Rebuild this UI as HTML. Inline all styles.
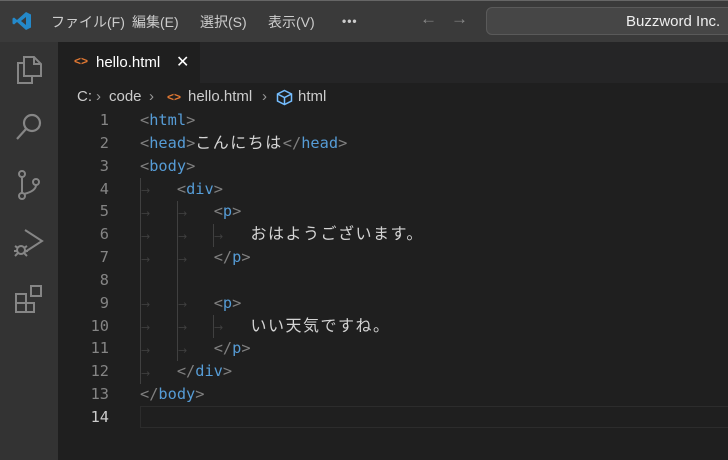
<!DOCTYPE html>
<html><head><meta charset="utf-8"><style>
*{margin:0;padding:0;box-sizing:border-box}
body{width:728px;height:460px;overflow:hidden;background:#1f1f1f;font-family:"Liberation Sans","Noto Sans CJK JP",sans-serif;position:relative}
.title{position:absolute;left:0;top:0;width:728px;height:42px;background:#3a3a3a;border-top:1px solid #666}
.menu{position:absolute;top:12px;color:#ccc;font-size:14px}
.search{position:absolute;left:486px;top:7px;width:250px;height:28px;background:#464646;border:1px solid #5a5a5a;border-radius:6px;color:#eee;font-size:15px;padding:5px 0 0 139px}
.act{position:absolute;left:0;top:42px;width:58px;height:418px;background:#333}
.tabs{position:absolute;left:58px;top:42px;width:670px;height:41px;background:#252526}
.tab{position:absolute;left:58px;top:42px;width:142px;height:41px;background:#1f1f1f;color:#fff;font-size:15px}
.cr{position:absolute;top:88px;color:#ccc;font-size:15px}
.code{position:absolute;font-family:"DejaVu Sans Mono","Noto Sans CJK JP",monospace;font-size:15.3px;line-height:22.85px;white-space:pre}
.code div{height:22.85px}
.ln{left:60px;width:49px;text-align:right;color:#858585}
.t{color:#808080}.k{color:#569cd6}.w{color:#d4d4d4}
.j{color:#d4d4d4;font-size:16px;letter-spacing:1.5px;line-height:10px}
.g{position:absolute;width:1px;background:#404040}
.ar{position:absolute;color:#3f3f3f;font-size:11px;font-family:"DejaVu Sans",sans-serif}
</style></head><body>
<div class="title"></div>
<svg style="position:absolute;left:12px;top:11px" width="20" height="20" viewBox="0 0 20 20"><path d="M14 1 L19 3.5 V16.5 L14 19 L5 11 L2 13.5 L0.5 12.5 V7.5 L2 6.5 L5 9 Z M14 6 L9 10 L14 14 Z" fill="#2489ca" fill-rule="evenodd"/></svg>
<div class="menu" style="left:51px">ファイル(F)</div>
<div class="menu" style="left:132px">編集(E)</div>
<div class="menu" style="left:200px">選択(S)</div>
<div class="menu" style="left:268px">表示(V)</div>
<div class="menu" style="left:342px;top:14px;font-weight:bold;font-size:12px;letter-spacing:1px">•••</div>
<div class="menu" style="left:420px;top:9px;color:#888;font-size:17px">←</div>
<div class="menu" style="left:451px;top:9px;color:#888;font-size:17px">→</div>
<div class="search">Buzzword Inc.</div>
<div class="act"></div>
<svg style="position:absolute;left:14px;top:54px" width="30" height="30" viewBox="0 0 30 30" fill="none" stroke="#868686" stroke-width="2"><path d="M10 3 H20 L27 10 V22 H10 Z M20 3 V10 H27"/><path d="M10 9 H4 V29 H18 V22"/></svg>
<svg style="position:absolute;left:14px;top:111px" width="30" height="30" viewBox="0 0 30 30" fill="none" stroke="#868686" stroke-width="2.2"><circle cx="18" cy="12" r="8"/><path d="M12 18 L3 28"/></svg>
<svg style="position:absolute;left:14px;top:169px" width="30" height="32" viewBox="0 0 30 32" fill="none" stroke="#868686" stroke-width="2"><circle cx="8" cy="5" r="3"/><circle cx="8" cy="27" r="3"/><circle cx="22" cy="13" r="3"/><path d="M8 8 V24 M22 16 Q22 22 10 25"/></svg>
<svg style="position:absolute;left:12px;top:226px" width="32" height="32" viewBox="0 0 32 32" fill="none" stroke="#868686" stroke-width="2"><path d="M13 4 L30 15 L13 26"/><circle cx="9" cy="24" r="4"/><path d="M3 20 L6 22 M15 20 L12 22 M2 25 H5 M13 25 H16 M3 30 L6 27 M15 30 L12 27"/></svg>
<svg style="position:absolute;left:14px;top:284px" width="30" height="30" viewBox="0 0 30 30" fill="none" stroke="#868686" stroke-width="2"><path d="M2 10 H12 V28 H2 Z M2 19 H20 V28 H12"/><rect x="17" y="2" width="10" height="10"/></svg>
<div class="tabs"></div>
<div class="tab"><span style="position:absolute;left:16px;top:12px;color:#e37933;font-size:12px;font-weight:bold">&lt;&gt;</span><span style="position:absolute;left:38px;top:12px">hello.html</span><span style="position:absolute;left:118px;top:10px;font-size:16px">✕</span></div>
<div class="cr" style="left:77px">C:</div>
<div class="cr" style="left:96px;color:#999">›</div>
<div class="cr" style="left:109px">code</div>
<div class="cr" style="left:149px;color:#999">›</div>
<div class="cr" style="left:167px;top:90px;color:#e37933;font-size:12px;font-weight:bold">&lt;&gt;</div>
<div class="cr" style="left:188px">hello.html</div>
<div class="cr" style="left:262px;color:#999">›</div>
<svg style="position:absolute;left:276px;top:89px" width="17" height="17" viewBox="0 0 17 17" fill="none" stroke="#75beff" stroke-width="1.5"><path d="M8.5 1.5 L15.5 5 V12 L8.5 15.5 L1.5 12 V5 Z M1.5 5 L8.5 8.5 L15.5 5 M8.5 8.5 V15.5"/></svg>
<div class="cr" style="left:298px">html</div>
<div style="position:absolute;left:140px;top:406px;width:600px;height:22px;border:1px solid #2c2c2c"></div>
<div class="code ln" style="top:109px"><div>1</div><div>2</div><div>3</div><div>4</div><div>5</div><div>6</div><div>7</div><div>8</div><div>9</div><div>10</div><div>11</div><div>12</div><div>13</div><div style="color:#ccc">14</div></div>
<div class="g" style="left:140px;top:178px;height:206px"></div>
<div class="g" style="left:177px;top:201px;height:160px"></div>
<div class="g" style="left:213px;top:224px;height:23px"></div>
<div class="g" style="left:213px;top:315px;height:23px"></div>
<div class="ar" style="left:141px;top:184px">→</div>
<div class="ar" style="left:141px;top:207px">→</div><div class="ar" style="left:178px;top:207px">→</div>
<div class="ar" style="left:141px;top:230px">→</div><div class="ar" style="left:178px;top:230px">→</div><div class="ar" style="left:214px;top:230px">→</div>
<div class="ar" style="left:141px;top:253px">→</div><div class="ar" style="left:178px;top:253px">→</div>
<div class="ar" style="left:141px;top:298px">→</div><div class="ar" style="left:178px;top:298px">→</div>
<div class="ar" style="left:141px;top:321px">→</div><div class="ar" style="left:178px;top:321px">→</div><div class="ar" style="left:214px;top:321px">→</div>
<div class="ar" style="left:141px;top:344px">→</div><div class="ar" style="left:178px;top:344px">→</div>
<div class="ar" style="left:141px;top:367px">→</div>
<div class="code" style="left:140px;top:109px"><div><span class="t">&lt;</span><span class="k">html</span><span class="t">&gt;</span></div><div><span class="t">&lt;</span><span class="k">head</span><span class="t">&gt;</span><span class="j">こんにちは</span><span class="t">&lt;/</span><span class="k">head</span><span class="t">&gt;</span></div><div><span class="t">&lt;</span><span class="k">body</span><span class="t">&gt;</span></div><div>    <span class="t">&lt;</span><span class="k">div</span><span class="t">&gt;</span></div><div>        <span class="t">&lt;</span><span class="k">p</span><span class="t">&gt;</span></div><div>            <span class="j">おはようございます。</span></div><div>        <span class="t">&lt;/</span><span class="k">p</span><span class="t">&gt;</span></div><div> </div><div>        <span class="t">&lt;</span><span class="k">p</span><span class="t">&gt;</span></div><div>            <span class="j">いい天気ですね。</span></div><div>        <span class="t">&lt;/</span><span class="k">p</span><span class="t">&gt;</span></div><div>    <span class="t">&lt;/</span><span class="k">div</span><span class="t">&gt;</span></div><div><span class="t">&lt;/</span><span class="k">body</span><span class="t">&gt;</span></div></div>
</body></html>
